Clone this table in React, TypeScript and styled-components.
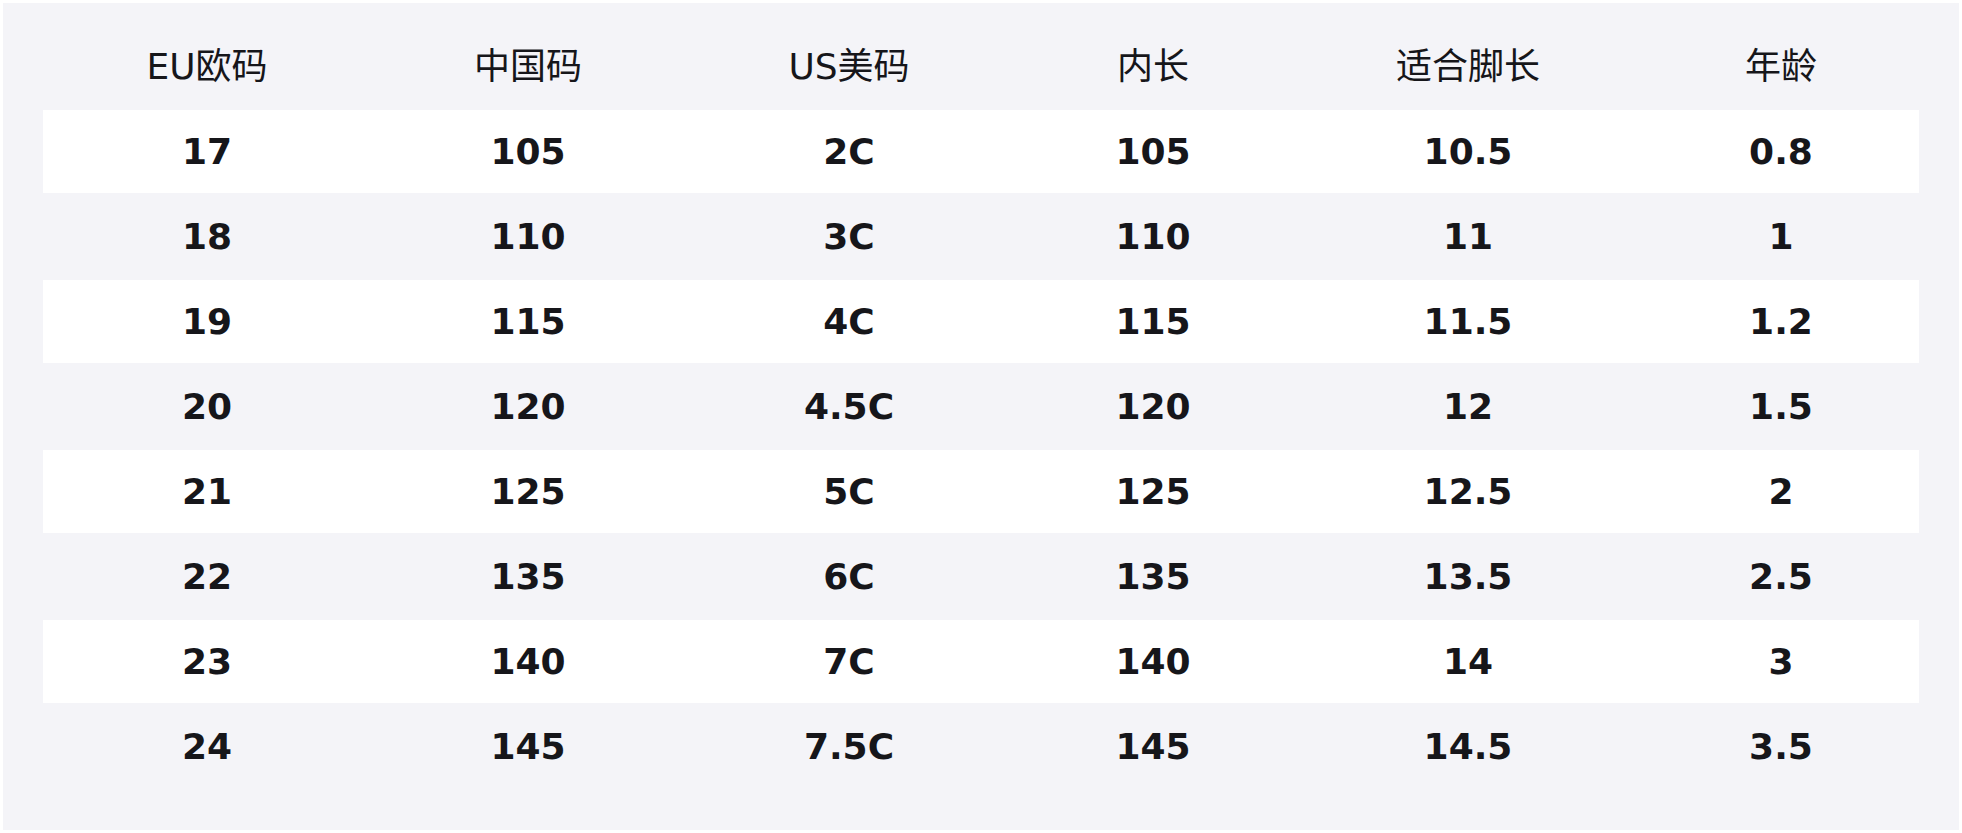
import styled, { createGlobalStyle } from 'styled-components';

const GlobalStyle = createGlobalStyle`
  html, body {
    margin: 0;
    padding: 0;
    background: #ffffff;
  }
  body {
    font-family: 'DejaVu Sans', 'Noto Sans CJK SC', sans-serif;
  }
`;

const Page = styled.div`
  padding: 3px;
`;

const Panel = styled.div`
  background: #f4f4f8;
  padding: 22px 40px 42px;
  display: flex;
  flex-direction: column;
  gap: 2px;
`;

const Row = styled.div<{ $striped?: boolean }>`
  display: grid;
  grid-template-columns: 328fr 314fr 328fr 280fr 350fr 276fr;
  align-items: center;
  height: 83px;
  background: ${(p) => (p.$striped ? '#ffffff' : 'transparent')};
`;

const Cell = styled.div<{ $head?: boolean }>`
  text-align: center;
  font-size: 36px;
  line-height: 1;
  color: #16161a;
  font-weight: ${(p) => (p.$head ? 400 : 700)};
  white-space: nowrap;
`;

const headers = ['EU欧码', '中国码', 'US美码', '内长', '适合脚长', '年龄'];

const rows = [
  ['17', '105', '2C', '105', '10.5', '0.8'],
  ['18', '110', '3C', '110', '11', '1'],
  ['19', '115', '4C', '115', '11.5', '1.2'],
  ['20', '120', '4.5C', '120', '12', '1.5'],
  ['21', '125', '5C', '125', '12.5', '2'],
  ['22', '135', '6C', '135', '13.5', '2.5'],
  ['23', '140', '7C', '140', '14', '3'],
  ['24', '145', '7.5C', '145', '14.5', '3.5'],
];

export default function App() {
  return (
    <Page>
      <GlobalStyle />
      <Panel>
        <Row>
          {headers.map((h) => (
            <Cell key={h} $head>
              {h}
            </Cell>
          ))}
        </Row>
        {rows.map((r, i) => (
          <Row key={r[0]} $striped={i % 2 === 0}>
            {r.map((v, j) => (
              <Cell key={j}>{v}</Cell>
            ))}
          </Row>
        ))}
      </Panel>
    </Page>
  );
}
